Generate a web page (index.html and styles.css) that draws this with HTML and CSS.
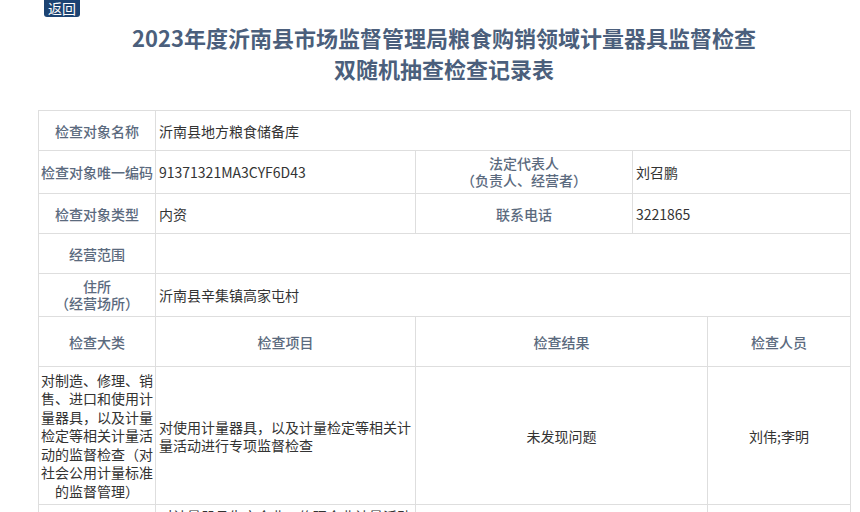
FILE: index.html
```html
<!DOCTYPE html>
<html lang="zh-CN">
<head>
    <meta charset="UTF-8">
    <meta name="viewport" content="width=device-width, initial-scale=1.0">
    <title>检查记录表</title>
    <link rel="stylesheet" href="styles.css">
</head>
<body>
    <div class="page">
        <a class="back-btn" href="#">返回</a>
        <h1 class="title">2023年度沂南县市场监督管理局粮食购销领域计量器具监督检查<br>双随机抽查检查记录表</h1>

        <table class="record">
            <colgroup>
                <col style="width: 117px">
                <col style="width: 260px">
                <col style="width: 217px">
                <col style="width: 75px">
                <col style="width: 143px">
            </colgroup>
            <tr class="row-a">
                <td class="label">检查对象名称</td>
                <td class="value" colspan="4">沂南县地方粮食储备库</td>
            </tr>
            <tr class="row-b">
                <td class="label">检查对象唯一编码</td>
                <td class="value">91371321MA3CYF6D43</td>
                <td class="label small">法定代表人<br>（负责人、经营者）</td>
                <td class="value" colspan="2">刘召鹏</td>
            </tr>
            <tr class="row-a">
                <td class="label">检查对象类型</td>
                <td class="value">内资</td>
                <td class="label">联系电话</td>
                <td class="value" colspan="2">3221865</td>
            </tr>
            <tr class="row-a">
                <td class="label">经营范围</td>
                <td class="value" colspan="4"></td>
            </tr>
            <tr class="row-b">
                <td class="label small">住所<br>（经营场所）</td>
                <td class="value" colspan="4">沂南县辛集镇高家屯村</td>
            </tr>
            <tr class="row-head">
                <td class="label">检查大类</td>
                <td class="label">检查项目</td>
                <td class="label" colspan="2">检查结果</td>
                <td class="label">检查人员</td>
            </tr>
            <tr>
                <td class="category">对制造、修理、销售、进口和使用计量器具，以及计量检定等相关计量活动的监督检查（对社会公用计量标准的监督管理）</td>
                <td class="value wrap">对使用计量器具，以及计量检定等相关计量活动进行专项监督检查</td>
                <td class="center" colspan="2">未发现问题</td>
                <td class="center">刘伟;李明</td>
            </tr>
            <tr>
                <td class="category"></td>
                <td class="value wrap top">对计量器具生产企业、修理企业计量活动进行监督检查</td>
                <td class="center" colspan="2"></td>
                <td class="center"></td>
            </tr>
        </table>
    </div>
</body>
</html>
```

FILE: styles.css
```css
body {
    margin: 0;
    padding: 0;
    background-color: #fff;
    font-family: "Noto Sans CJK SC", "Liberation Sans", sans-serif;
    overflow: hidden;
}

.page {
    width: 812px;
    margin-left: 38px;
}

.back-btn {
    display: block;
    width: 36px;
    height: 17px;
    margin-left: 6px;
    background-color: #1c4372;
    color: #fff;
    font-size: 14px;
    line-height: 16px;
    text-align: center;
    text-decoration: none;
    border-radius: 0 0 3px 3px;
}

.title {
    margin: 5px 0 0;
    height: 88px;
    font-size: 22px;
    line-height: 31px;
    font-weight: bold;
    color: #4b5f7c;
    text-align: center;
}

.record {
    width: 812px;
    table-layout: fixed;
    border-collapse: collapse;
    font-size: 14px;
}

.record td {
    border: 1px solid #dedede;
    padding: 0 2px;
    vertical-align: middle;
    color: #333;
}

.row-a {
    height: 40px;
}

.row-b {
    height: 43px;
}

.row-head {
    height: 50px;
}

/* 标题单元格 */
.record td.label {
    text-align: center;
    color: #5b6a7e;
    font-weight: 500;
    white-space: nowrap;
}

.record td.small {
    line-height: 17.5px;
}

.record td.value {
    padding-left: 3px;
}

.record td.wrap {
    line-height: 18px;
}

.record td.top {
    vertical-align: top;
    padding-top: 2px;
}

.record td.category {
    height: 137px;
    text-align: center;
    line-height: 18.5px;
    padding: 0 2px;
}

.record td.center {
    text-align: center;
}
```
